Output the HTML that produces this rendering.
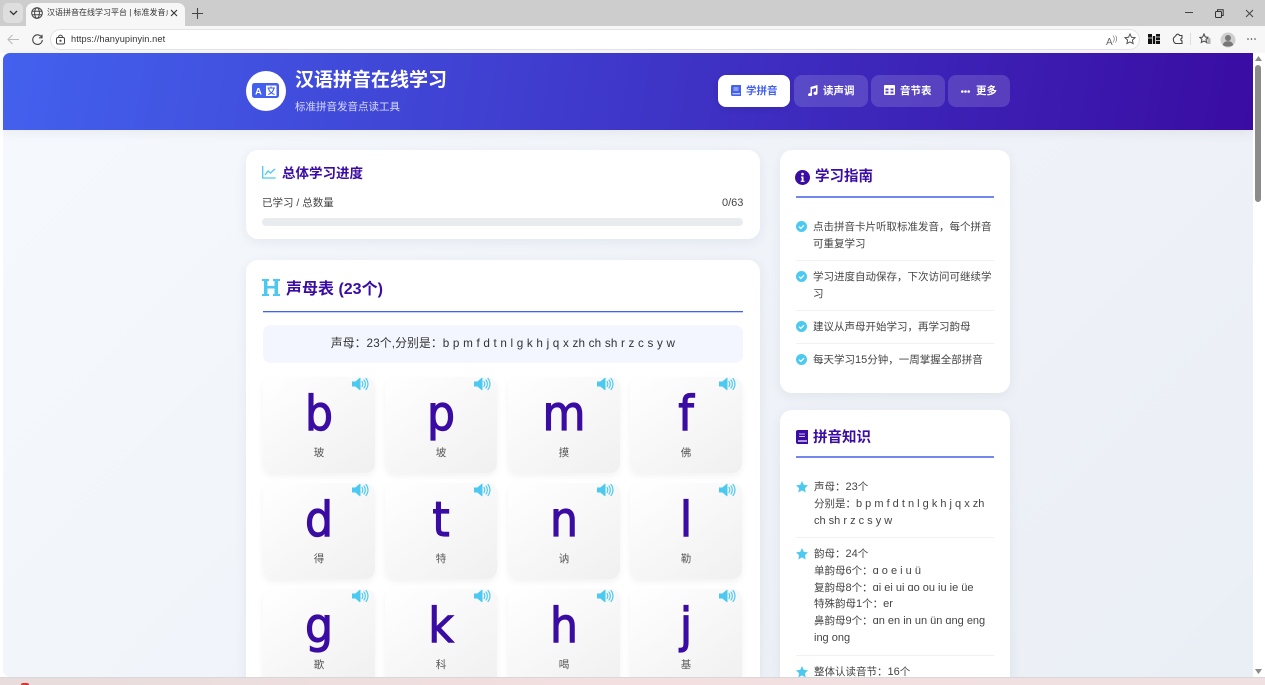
<!DOCTYPE html>
<html lang="zh"><head><meta charset="utf-8"><title>汉语拼音在线学习平台</title>
<style>
*{box-sizing:border-box;margin:0;padding:0}
html,body{width:1265px;height:685px;overflow:hidden;background:#fff}
body{font-family:"Liberation Sans","Noto Sans CJK SC",sans-serif;position:relative;color:#333}
.a{position:absolute;white-space:nowrap}
.panel{position:absolute;background:#fff;border-radius:12px;box-shadow:0 3px 12px rgba(30,50,90,.07)}
.nav{position:absolute;top:75px;height:32px;border-radius:8px;background:rgba(255,255,255,.15);color:#fff;font-size:10.500px;font-weight:700;line-height:32px}
.nav svg{position:absolute;top:10px}
.nav span{position:absolute;top:0}
.card{position:absolute;width:112px;height:96px;border-radius:10px;background:linear-gradient(145deg,#fff 0%,#f0f0f0 100%);box-shadow:0 3px 7px rgba(0,0,0,.05);overflow:visible}
.card b{position:absolute;left:0;right:0;top:6px;text-align:center;font:400 48px/62px "DejaVu Sans",sans-serif;color:#3a0ca3;-webkit-text-stroke:1.200px #3a0ca3;transform:scaleX(.92)}
.card i{position:absolute;left:0;right:0;top:69px;text-align:center;font:normal 10.500px/14px "Liberation Sans","Noto Sans CJK SC",sans-serif;color:#555}
.card svg{position:absolute;left:89px;top:0}
.t{position:absolute;font-size:10.500px;line-height:16.800px;color:#444;white-space:nowrap}
.t u{text-decoration:none;font-size:11px}
.hr{position:absolute;height:1px;background:#f1f1f3}
</style></head><body>
<svg width="0" height="0" style="position:absolute"><defs>
<g id="spk"><path d="M0 5h3.500L8 1.200v11.600L3.500 9H0z" fill="#4cc9f0" stroke="#4cc9f0" stroke-linejoin="round"/><path d="M10 4.500c1 1.500 1 3.500 0 5M12 3c1.800 2.300 1.800 5.700 0 8M14 1.500c2.600 3.300 2.600 7.700 0 11" fill="none" stroke="#4cc9f0" stroke-width="1.200" stroke-linecap="round"/></g>
<g id="chk"><circle cx="5.500" cy="5.500" r="5.500" fill="#4cc9f0"/><path d="M3 5.700l1.800 1.800L8 4.200" fill="none" stroke="#fff" stroke-width="1.300"/></g>
<path id="star" d="M6 0l1.800 3.900 4.200.5-3.100 2.900.8 4.200L6 9.400l-3.700 2.100.8-4.200L0 4.400l4.200-.5z" fill="#4cc9f0"/>
</defs></svg>

<!-- browser chrome -->
<div class="a" style="left:0;top:0;width:1265px;height:26px;background:#cdcdcd"></div>
<div class="a" style="left:3px;top:3px;width:20px;height:20px;background:#dedede;border-radius:5px"></div>
<svg class="a" style="left:9px;top:10px" width="9" height="6"><path d="M1 1l3.500 3.500L8 1" fill="none" stroke="#333" stroke-width="1.300"/></svg>
<div class="a" style="left:26px;top:3px;width:159px;height:24px;background:#f7f7f7;border-radius:7px 7px 0 0"></div>
<svg class="a" style="left:31px;top:7px" width="12" height="12" fill="none" stroke="#444"><circle cx="6" cy="6" r="5.300"/><ellipse cx="6" cy="6" rx="2.400" ry="5.300"/><path d="M1 4.200h10M1 7.800h10"/></svg>
<div class="a" style="left:47px;top:6px;width:121px;height:14px;overflow:hidden;font-size:8px;line-height:14px;color:#333">汉语拼音在线学习平台 | 标准发音点读</div>
<svg class="a" style="left:170px;top:9px" width="8" height="8"><path d="M1 1l6 6M7 1l-6 6" stroke="#333" stroke-width="1.100"/></svg>
<svg class="a" style="left:192px;top:8px" width="11" height="11"><path d="M5.500 0v11M0 5.500h11" stroke="#444" stroke-width="1.100"/></svg>
<svg class="a" style="left:1184px;top:12px" width="10" height="2"><path d="M1 .5h8" stroke="#444"/></svg>
<svg class="a" style="left:1215px;top:9px" width="9" height="9" fill="none" stroke="#333"><rect x=".5" y="2.500" width="6" height="6" rx="1"/><path d="M2.500 2V.8h5.700v5.700H7"/></svg>
<svg class="a" style="left:1245px;top:9px" width="9" height="9"><path d="M1 1l7 7M8 1l-7 7" stroke="#444"/></svg>
<div class="a" style="left:0;top:26px;width:1265px;height:27px;background:#f7f7f7"></div>
<svg class="a" style="left:7px;top:34px" width="12" height="11" fill="none" stroke="#bbb" stroke-width="1.100"><path d="M12 5.500H1M5.500 1L1 5.500 5.500 10"/></svg>
<svg class="a" style="left:32px;top:34px" width="11" height="11" fill="none" stroke="#444" stroke-width="1.100"><path d="M9.800 3.500A4.800 4.800 0 1 0 10.300 6M10 .8v3H7"/></svg>
<div class="a" style="left:50px;top:29px;width:1090px;height:21px;background:#fff;border:1px solid #e3e3e3;border-radius:11px"></div>
<svg class="a" style="left:56px;top:34px" width="9" height="11" fill="none" stroke="#444"><rect x=".5" y="3.500" width="8" height="6.500" rx="1.500"/><path d="M2.500 3.500C2.500.3 6.500.3 6.500 3.500"/><circle cx="4.500" cy="6.700" r=".6" fill="#444"/></svg>
<div class="a" style="left:71px;top:33px;font-size:9.200px;line-height:13px;color:#333;letter-spacing:.1px">https://hanyupinyin.net</div>
<div class="a" style="left:1106px;top:33px;font-size:10px;line-height:13px;color:#666">A<span style="font-size:7px;vertical-align:4px">))</span></div>
<svg class="a" style="left:1124px;top:33px" width="12" height="12"><path d="M6 1l1.500 3.300 3.500.4-2.600 2.400.7 3.500L6 8.900l-3.100 1.700.7-3.500L1 4.700l3.500-.4z" fill="none" stroke="#555"/></svg>
<svg class="a" style="left:1148px;top:33px" width="12" height="12"><path d="M0 1h4v10H0zM4.800 3h2.400v8H4.800zM8 1h4v10H8z" fill="#111"/><path d="M0 5h4M8 4h4M8 7.500h4" stroke="#f7f7f7" stroke-width=".7"/></svg>
<svg class="a" style="left:1172px;top:33px" width="12" height="12" fill="none" stroke="#444" stroke-width="1.100"><path d="M4 2.500C4.500 .7 7 .7 7.500 2.500H10v2.600c-1.600 .4-1.600 2.400 0 2.800V10.500H3.500C1.500 9.500 1 7 1.500 5z"/></svg>
<div class="a" style="left:1190px;top:33px;width:1px;height:12px;background:#ddd"></div>
<svg class="a" style="left:1199px;top:33px" width="12" height="12" fill="none" stroke="#444"><path d="M5 1l1.300 3 2.700.3-2 2 .6 3L5 8 2.300 9.400l.6-3-2-2 2.700-.3z"/><path d="M8 6h3.500M8.500 8h3M7.500 10h4" stroke-width=".8"/></svg>
<svg class="a" style="left:1220px;top:32px" width="16" height="16"><circle cx="8" cy="8" r="7.500" fill="#cfcfcf"/><circle cx="8" cy="6" r="3" fill="#777"/><path d="M2.800 13c.7-3 2.800-3.700 5.200-3.700s4.500.7 5.200 3.700c-3 2.200-7.400 2.200-10.400 0z" fill="#777"/></svg>
<svg class="a" style="left:1247px;top:38px" width="9" height="2"><circle cx="1" cy="1" r=".8" fill="#444"/><circle cx="4.500" cy="1" r=".8" fill="#444"/><circle cx="8" cy="1" r=".8" fill="#444"/></svg>

<!-- page -->
<div class="a" style="left:3px;top:53px;width:1250px;height:624px;background:linear-gradient(135deg,#f6f9fd,#eaeef5);border-radius:7px 0 0 7px;overflow:hidden"></div>
<div class="a" style="left:3px;top:53px;width:1250px;height:77px;background:linear-gradient(100deg,#4361ee 0%,#3a0ca3 100%);border-radius:7px 0 0 0;box-shadow:0 3px 12px rgba(0,0,0,.06)"></div>
<div class="a" style="left:1253px;top:53px;width:12px;height:624px;background:#fff"></div>
<div class="a" style="left:1255px;top:65px;width:6px;height:137px;background:#8b8b8b;border-radius:3px"></div>
<svg class="a" style="left:1255px;top:56px" width="7" height="5"><path d="M3.500 0L7 5H0z" fill="#8a8a8a"/></svg>
<svg class="a" style="left:1255px;top:669px" width="7" height="5"><path d="M3.500 5L7 0H0z" fill="#8a8a8a"/></svg>

<!-- header -->
<div class="a" style="left:246px;top:71px;width:40px;height:40px;border-radius:50%;background:#fff"></div>
<svg class="a" style="left:252px;top:83px" width="27" height="16"><rect width="27" height="15" rx="2.500" fill="#4361ee"/><text x="3" y="11.500" font-size="9.500" font-weight="700" fill="#fff" font-family="Liberation Sans">A</text><rect x="14" y="2.500" width="10.500" height="10.500" fill="#fff"/><path d="M15.500 5h7.500M19 3.500V5M22 5c-.6 3-3 5.500-5.800 6.500M16.500 5.500c.7 2.800 3 5 6 6" stroke="#4361ee" stroke-width="1.100" fill="none"/></svg>
<div class="a" style="left:295px;top:67px;font-size:19px;line-height:28px;font-weight:700;color:#fff">汉语拼音在线学习</div>
<div class="a" style="left:295px;top:100px;font-size:10.500px;line-height:15px;color:rgba(255,255,255,.8)">标准拼音发音点读工具</div>

<div class="nav" style="left:718px;width:72px;background:#fff;color:#4361ee;box-shadow:0 2px 6px rgba(0,0,0,.1)"><svg style="left:13px" width="10" height="11"><path d="M1.500 0H10v11H1.500A1.500 1.500 0 0 1 0 9.500v-8A1.500 1.500 0 0 1 1.500 0z" fill="#4361ee"/><path d="M2.500 3h5M2.500 5h5M1.500 8.800H9" stroke="#fff" stroke-width=".8"/></svg><span style="left:28px">学拼音</span></div>
<div class="nav" style="left:794px;width:74px"><svg style="left:13px" width="11" height="11"><path d="M3.500 2L10.500 0v8.200a2 1.700 0 1 1-1.500-1.600V3L5 4v5.700a2 1.700 0 1 1-1.500-1.600z" fill="#fff"/></svg><span style="left:29px">读声调</span></div>
<div class="nav" style="left:871px;width:74px"><svg style="left:13px" width="11" height="10"><path d="M1 0h9a1 1 0 0 1 1 1v8a1 1 0 0 1-1 1H1a1 1 0 0 1-1-1V1a1 1 0 0 1 1-1zm.5 3.500v1.800h3V3.500zm5 0v1.800h3V3.500zm-5 3v2h3v-2zm5 0v2h3v-2z" fill="#fff" fill-rule="evenodd"/></svg><span style="left:29px">音节表</span></div>
<div class="nav" style="left:948px;width:62px"><svg style="left:13px;top:15px" width="9" height="3"><circle cx="1.300" cy="1.500" r="1.300" fill="#fff"/><circle cx="4.500" cy="1.500" r="1.300" fill="#fff"/><circle cx="7.700" cy="1.500" r="1.300" fill="#fff"/></svg><span style="left:28px">更多</span></div>

<!-- progress -->
<div class="panel" style="left:246px;top:150px;width:514px;height:89px"></div>
<svg class="a" style="left:262px;top:166px" width="14" height="13" fill="none"><path d="M.7 0v12h13" stroke="#4cc9f0" stroke-width="1.300"/><path d="M3 9l3-4 2.500 2L13 3" stroke="#4cc9f0" stroke-width="1.300"/></svg>
<div class="a" style="left:282px;top:164px;font-size:13.500px;line-height:19px;font-weight:700;color:#3a0ca3">总体学习进度</div>
<div class="a" style="left:262px;top:195px;font-size:10.500px;line-height:16px;color:#444">已学习 / 总数量</div>
<div class="a" style="left:722px;top:195px;font-size:11px;line-height:16px;color:#444">0/63</div>
<div class="a" style="left:262px;top:218px;width:481px;height:8px;border-radius:4px;background:#e9ecef"></div>

<!-- main -->
<div class="panel" style="left:246px;top:260px;width:514px;height:440px"></div>
<svg class="a" style="left:262px;top:279px" width="18" height="17"><path d="M0 0h7v2h-1.500v5h7V2H11V0h7v2h-2v13h2v2h-7v-2h1.500V9.500h-7V15H7v2H0v-2h2V2H0z" fill="#4cc9f0"/></svg>
<div class="a" style="left:286px;top:278px;font-size:16px;line-height:23px;font-weight:700;color:#3a0ca3">声母表 (23个)</div>
<div class="a" style="left:263px;top:311px;width:480px;height:1px;background:#4361ee;box-shadow:0 1px 0 rgba(67,97,238,.3)"></div>
<div class="a" style="left:263px;top:325px;width:480px;height:38px;border-radius:8px;background:#f3f6fe"></div>
<div class="a" style="left:263px;top:336px;width:480px;text-align:center;font-size:11.700px;line-height:16px;color:#333;letter-spacing:.2px">声母：23个,分别是：b p m f d t n l g k h j q x zh ch sh r z c s y w</div>

<div class="card" style="left:263px;top:377px"><svg width="18" height="14"><use href="#spk"/></svg><b>b</b><i>玻</i></div>
<div class="card" style="left:385px;top:377px"><svg width="18" height="14"><use href="#spk"/></svg><b>p</b><i>坡</i></div>
<div class="card" style="left:508px;top:377px"><svg width="18" height="14"><use href="#spk"/></svg><b>m</b><i>摸</i></div>
<div class="card" style="left:630px;top:377px"><svg width="18" height="14"><use href="#spk"/></svg><b>f</b><i>佛</i></div>
<div class="card" style="left:263px;top:483px"><svg width="18" height="14"><use href="#spk"/></svg><b>d</b><i>得</i></div>
<div class="card" style="left:385px;top:483px"><svg width="18" height="14"><use href="#spk"/></svg><b>t</b><i>特</i></div>
<div class="card" style="left:508px;top:483px"><svg width="18" height="14"><use href="#spk"/></svg><b>n</b><i>讷</i></div>
<div class="card" style="left:630px;top:483px"><svg width="18" height="14"><use href="#spk"/></svg><b>l</b><i>勒</i></div>
<div class="card" style="left:263px;top:589px"><svg width="18" height="14"><use href="#spk"/></svg><b>g</b><i>歌</i></div>
<div class="card" style="left:385px;top:589px"><svg width="18" height="14"><use href="#spk"/></svg><b>k</b><i>科</i></div>
<div class="card" style="left:508px;top:589px"><svg width="18" height="14"><use href="#spk"/></svg><b>h</b><i>喝</i></div>
<div class="card" style="left:630px;top:589px"><svg width="18" height="14"><use href="#spk"/></svg><b>j</b><i>基</i></div>

<!-- guide -->
<div class="panel" style="left:780px;top:150px;width:230px;height:243px"></div>
<svg class="a" style="left:795px;top:170px" width="15" height="15"><circle cx="7.500" cy="7.500" r="7.500" fill="#3a0ca3"/><circle cx="7.500" cy="4" r="1.300" fill="#fff"/><path d="M6 6.500h2.500v4.200h1v1.200H5.700v-1.200h1V7.700H6z" fill="#fff"/></svg>
<div class="a" style="left:815px;top:167px;font-size:14.500px;line-height:21px;font-weight:700;color:#3a0ca3">学习指南</div>
<div class="a" style="left:796px;top:196px;width:198px;height:2px;background:#7288ee"></div>
<svg class="a" style="left:796px;top:221px" width="11" height="11"><use href="#chk"/></svg>
<div class="t" style="left:813px;top:219px">点击拼音卡片听取标准发音，每个拼音<br>可重复学习</div>
<div class="hr" style="left:796px;top:260px;width:198px"></div>
<svg class="a" style="left:796px;top:271px" width="11" height="11"><use href="#chk"/></svg>
<div class="t" style="left:813px;top:269px">学习进度自动保存，下次访问可继续学<br>习</div>
<div class="hr" style="left:796px;top:310px;width:198px"></div>
<svg class="a" style="left:796px;top:321px" width="11" height="11"><use href="#chk"/></svg>
<div class="t" style="left:813px;top:319px">建议从声母开始学习，再学习韵母</div>
<div class="hr" style="left:796px;top:343px;width:198px"></div>
<svg class="a" style="left:796px;top:354px" width="11" height="11"><use href="#chk"/></svg>
<div class="t" style="left:813px;top:352px">每天学习<u>15</u>分钟，一周掌握全部拼音</div>

<!-- knowledge -->
<div class="panel" style="left:780px;top:410px;width:230px;height:290px"></div>
<svg class="a" style="left:796px;top:430px" width="12" height="14"><path d="M2 0h10v14H2a2 2 0 0 1-2-2V2a2 2 0 0 1 2-2z" fill="#3a0ca3"/><path d="M2 11h9" stroke="#fff" stroke-width="1.200"/><path d="M3 4h6M3 6.500h6" stroke="#fff" stroke-width=".7"/></svg>
<div class="a" style="left:813px;top:428px;font-size:14.500px;line-height:21px;font-weight:700;color:#3a0ca3">拼音知识</div>
<div class="a" style="left:796px;top:456px;width:198px;height:2px;background:#7288ee"></div>
<svg class="a" style="left:796px;top:481px" width="12" height="12"><use href="#star"/></svg>
<div class="t" style="left:814px;top:479px">声母：<u>23</u>个<br>分别是：<u>b p m f d t n l g k h j q x zh</u><br><u>ch sh r z c s y w</u></div>
<div class="hr" style="left:796px;top:537px;width:198px"></div>
<svg class="a" style="left:796px;top:548px" width="12" height="12"><use href="#star"/></svg>
<div class="t" style="left:814px;top:546px">韵母：<u>24</u>个<br>单韵母<u>6</u>个：<u>ɑ o e i u ü</u><br>复韵母<u>8</u>个：<u>ɑi ei ui ɑo ou iu ie üe</u><br>特殊韵母<u>1</u>个：<u>er</u><br>鼻韵母<u>9</u>个：<u>ɑn en in un ün ɑng eng</u><br><u>ing ong</u></div>
<div class="hr" style="left:796px;top:655px;width:198px"></div>
<svg class="a" style="left:796px;top:666px" width="12" height="12"><use href="#star"/></svg>
<div class="t" style="left:814px;top:664px">整体认读音节：<u>16</u>个</div>
<div class="a" style="left:0;top:677px;width:1265px;height:8px;background:linear-gradient(90deg,#e8dcdc,#f3dfe0 50%,#f0e0e2);border-top:1px solid #d8d8d8"></div>
<div class="a" style="left:21px;top:683px;width:8px;height:2px;background:#d33;border-radius:4px 4px 0 0"></div>
</body></html>
